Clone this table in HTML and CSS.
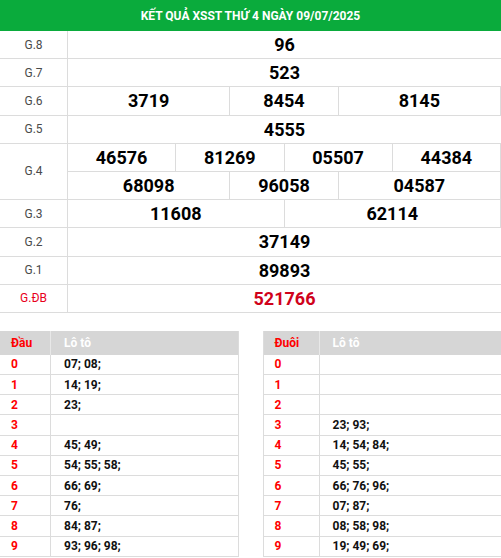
FILE: index.html
```html
<!DOCTYPE html>
<html lang="vi">
<head>
<meta charset="utf-8">
<title>KQ XSST</title>
<link rel="stylesheet" href="styles.css">
</head>
<body>
<div class="title">KẾT QUẢ XSST THỨ 4 NGÀY 09/07/2025</div>
<div class="results">
  <div class="lbl">G.8</div><div class="num s8">96</div>
  <div class="lbl">G.7</div><div class="num s8">523</div>
  <div class="lbl">G.6</div><div class="num s3">3719</div><div class="num s2">8454</div><div class="num s3">8145</div>
  <div class="lbl">G.5</div><div class="num s8">4555</div>
  <div class="lbl r2">G.4</div><div class="num s2">46576</div><div class="num s2">81269</div><div class="num s2">05507</div><div class="num s2">44384</div>
  <div class="num s3">68098</div><div class="num s2">96058</div><div class="num s3">04587</div>
  <div class="lbl">G.3</div><div class="num s4">11608</div><div class="num s4">62114</div>
  <div class="lbl">G.2</div><div class="num s8">37149</div>
  <div class="lbl">G.1</div><div class="num s8">89893</div>
  <div class="lbl red">G.ĐB</div><div class="num s8 db">521766</div>
</div>
<div class="loto">
  <div class="lt lt-left">
    <div class="hd k">Đầu</div><div class="hd v">Lô tô</div>
    <div class="k">0</div><div class="v">07; 08;</div>
    <div class="k">1</div><div class="v">14; 19;</div>
    <div class="k">2</div><div class="v">23;</div>
    <div class="k">3</div><div class="v"></div>
    <div class="k">4</div><div class="v">45; 49;</div>
    <div class="k">5</div><div class="v">54; 55; 58;</div>
    <div class="k">6</div><div class="v">66; 69;</div>
    <div class="k">7</div><div class="v">76;</div>
    <div class="k">8</div><div class="v">84; 87;</div>
    <div class="k">9</div><div class="v">93; 96; 98;</div>
  </div>
  <div class="lt lt-right">
    <div class="hd k">Đuôi</div><div class="hd v">Lô tô</div>
    <div class="k">0</div><div class="v"></div>
    <div class="k">1</div><div class="v"></div>
    <div class="k">2</div><div class="v"></div>
    <div class="k">3</div><div class="v">23; 93;</div>
    <div class="k">4</div><div class="v">14; 54; 84;</div>
    <div class="k">5</div><div class="v">45; 55;</div>
    <div class="k">6</div><div class="v">66; 76; 96;</div>
    <div class="k">7</div><div class="v">07; 87;</div>
    <div class="k">8</div><div class="v">08; 58; 98;</div>
    <div class="k">9</div><div class="v">19; 49; 69;</div>
  </div>
</div>
</body>
</html>
```

FILE: styles.css
```css
* { box-sizing: border-box; }
html, body { margin: 0; padding: 0; background: #fff; }
body { font-family: Roboto, "Liberation Sans", sans-serif; color: #000; width: 501px; overflow: hidden; }

.title {
  height: 31px;
  background: #0aab3c;
  color: #fff;
  font-weight: 700;
  font-size: 12px;
  display: flex;
  align-items: center;
  justify-content: center;
}

.results {
  display: grid;
  grid-template-columns: 68px repeat(8, 1fr);
  grid-auto-rows: 28.2px;
}
.results > div {
  border-bottom: 1px solid #dcdcdc;
  display: flex;
  align-items: center;
  justify-content: center;
}
.lbl {
  border-right: 1px solid #dcdcdc;
  color: #4a4a4a;
  font-size: 12px;
}
.lbl.red { color: #e8001c; }
.r2 { grid-row: span 2; }
.num {
  font-size: 18px;
  font-weight: 700;
  border-right: 1px solid #dcdcdc;
}
.num.s8, .results > .num:last-child { border-right: none; }
.s2 { grid-column: span 2; }
.s3 { grid-column: span 3; }
.s4 { grid-column: span 4; }
.s8 { grid-column: span 8; }
.db { color: #d0021b; }

.loto {
  margin-top: 18px;
  display: flex;
  gap: 24px;
}
.lt {
  flex: 1;
  display: grid;
  grid-template-rows: 24px repeat(10, 20.2px);
}
.lt-left { grid-template-columns: 51px 1fr; border-right: 1px solid #dcdcdc; }
.lt-right { grid-template-columns: 56px 1fr; border-left: 1px solid #dcdcdc; }
.lt > div {
  font-size: 12px;
  font-weight: 700;
  display: flex;
  align-items: center;
  border-bottom: 1px solid #dcdcdc;
}
.lt .k { color: #f00; padding-left: 11px; border-right: 1px solid #dcdcdc; }
.lt .v { padding-left: 13px; color: #111; }
.lt .hd { background: #d6d6d6; border-bottom: none; }
.lt .hd.k { border-right: 1px solid #e8e8e8; color: #f00; }
.lt .hd.v { color: #fff; }
```
